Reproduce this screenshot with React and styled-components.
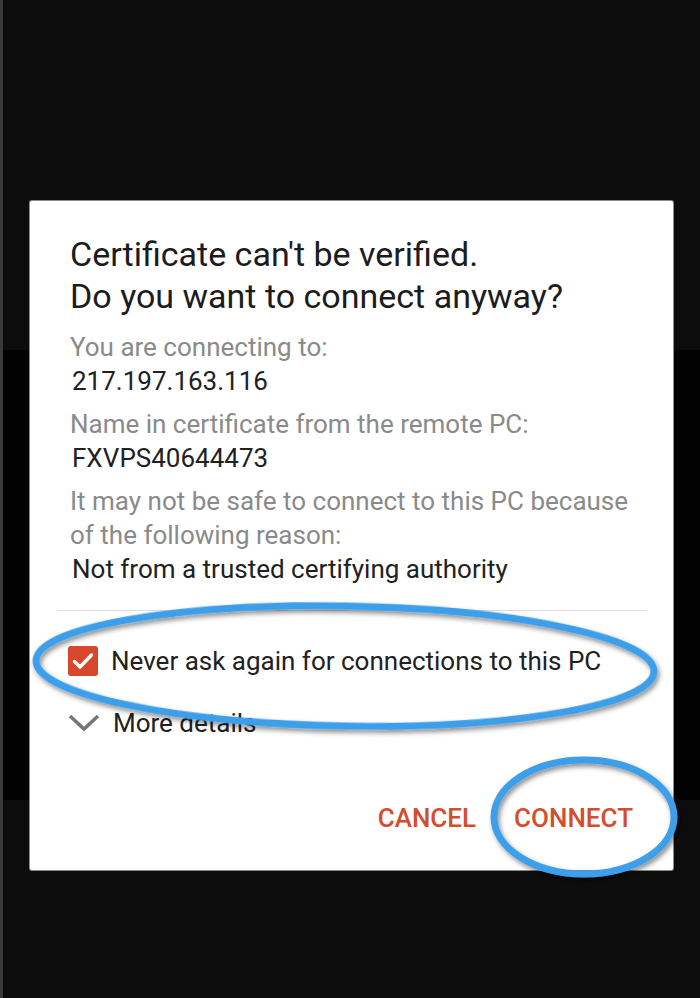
import React from "react";
import styled, { createGlobalStyle } from "styled-components";

const GlobalStyle = createGlobalStyle`
  html, body {
    margin: 0;
    padding: 0;
  }
  body {
    background: linear-gradient(#0c0c0c 0 350px, #020202 350px 800px, #0c0c0c 800px);
    font-family: Roboto, "Liberation Sans", sans-serif;
  }
`;

const Page = styled.div`
  min-height: 998px;
  box-sizing: border-box;
  border-left: 3px solid #3a3a3a;
  padding: 201px 0 0 27px;
  position: relative;
`;

const Dialog = styled.div`
  width: 643px;
  background: #fff;
  border-radius: 2px;
  box-shadow: 0 0 0 1px #8c8c8c;
  padding-bottom: 29px;
`;

const Content = styled.div`
  padding: 32px 40px 0 40px;
`;

const Title = styled.h1`
  margin: 0 0 13px 0;
  font-size: 34px;
  line-height: 42px;
  font-weight: 400;
  color: #1c1c1c;
`;

const Group = styled.div`
  display: flex;
  flex-direction: column;
  margin-top: 9px;
`;

const Line = styled.div`
  font-size: 26px;
  line-height: 34px;
  color: ${(props) => (props.muted ? "#8a8a8a" : "#212121")};
  margin-left: ${(props) => (props.muted ? "0" : "2px")};
`;

const Divider = styled.hr`
  border: 0;
  height: 1px;
  background: #dddddd;
  margin: 24px 26px 0 27px;
`;

const OptionRow = styled.div`
  display: flex;
  align-items: center;
  gap: 13px;
  padding: 0 38px;
  height: 50px;
  margin-top: ${(props) => props.top || "0"};
  font-size: 26px;
  color: #212121;
`;

const Box = styled.span`
  width: 30px;
  height: 30px;
  border-radius: 3px;
  background: #d8472b;
  display: flex;
  align-items: center;
  justify-content: center;
  flex-shrink: 0;
`;

const Actions = styled.div`
  display: flex;
  justify-content: flex-end;
  gap: 22px;
  padding: 0 32px;
  margin-top: 47px;
`;

const Button = styled.button`
  background: none;
  border: 0;
  padding: 8px;
  font-family: Roboto, "Liberation Sans", sans-serif;
  font-size: 26px;
  font-weight: 500;
  color: #d24e2d;
`;

const Marks = styled.svg`
  position: absolute;
  left: 0;
  top: 0;
  width: 700px;
  height: 998px;
  pointer-events: none;
  overflow: visible;
`;

function Check() {
  return (
    <svg width="22" height="18" viewBox="0 0 22 18">
      <path d="M2.5 9.5 L8 15 L19.5 3" fill="none" stroke="#fff" strokeWidth="3.4" strokeLinecap="round" strokeLinejoin="round" />
    </svg>
  );
}

function Chevron() {
  return (
    <svg width="32" height="30" viewBox="0 0 32 30">
      <path d="M2 8 L16 21 L30 8" fill="none" stroke="#777" strokeWidth="3.6" />
    </svg>
  );
}

export default function App() {
  return (
    <>
      <GlobalStyle />
      <Page>
        <Dialog>
          <Content>
            <Title>
              Certificate can't be verified.
              <br />
              Do you want to connect anyway?
            </Title>
            <Group>
              <Line muted>You are connecting to:</Line>
              <Line>217.197.163.116</Line>
            </Group>
            <Group>
              <Line muted>Name in certificate from the remote PC:</Line>
              <Line>FXVPS40644473</Line>
            </Group>
            <Group>
              <Line muted>It may not be safe to connect to this PC because of the following reason:</Line>
              <Line>Not from a trusted certifying authority</Line>
            </Group>
          </Content>
          <Divider />
          <OptionRow top="25px">
            <Box>
              <Check />
            </Box>
            Never ask again for connections to this PC
          </OptionRow>
          <OptionRow top="12px">
            <Chevron />
            More details
          </OptionRow>
          <Actions>
            <Button>CANCEL</Button>
            <Button>CONNECT</Button>
          </Actions>
        </Dialog>
        <Marks viewBox="0 0 700 998">
          <defs>
            <filter id="shade" x="-10%" y="-30%" width="120%" height="160%">
              <feDropShadow dx="2" dy="3" stdDeviation="2.5" floodColor="#000" floodOpacity="0.45" />
            </filter>
          </defs>
          <ellipse cx="342" cy="666" rx="309" ry="60" transform="rotate(1 342 666)" fill="none" stroke="#3d9fe9" strokeWidth="7" filter="url(#shade)" />
          <ellipse cx="581" cy="817" rx="90" ry="57" fill="none" stroke="#3d9fe9" strokeWidth="7" filter="url(#shade)" />
        </Marks>
      </Page>
    </>
  );
}
